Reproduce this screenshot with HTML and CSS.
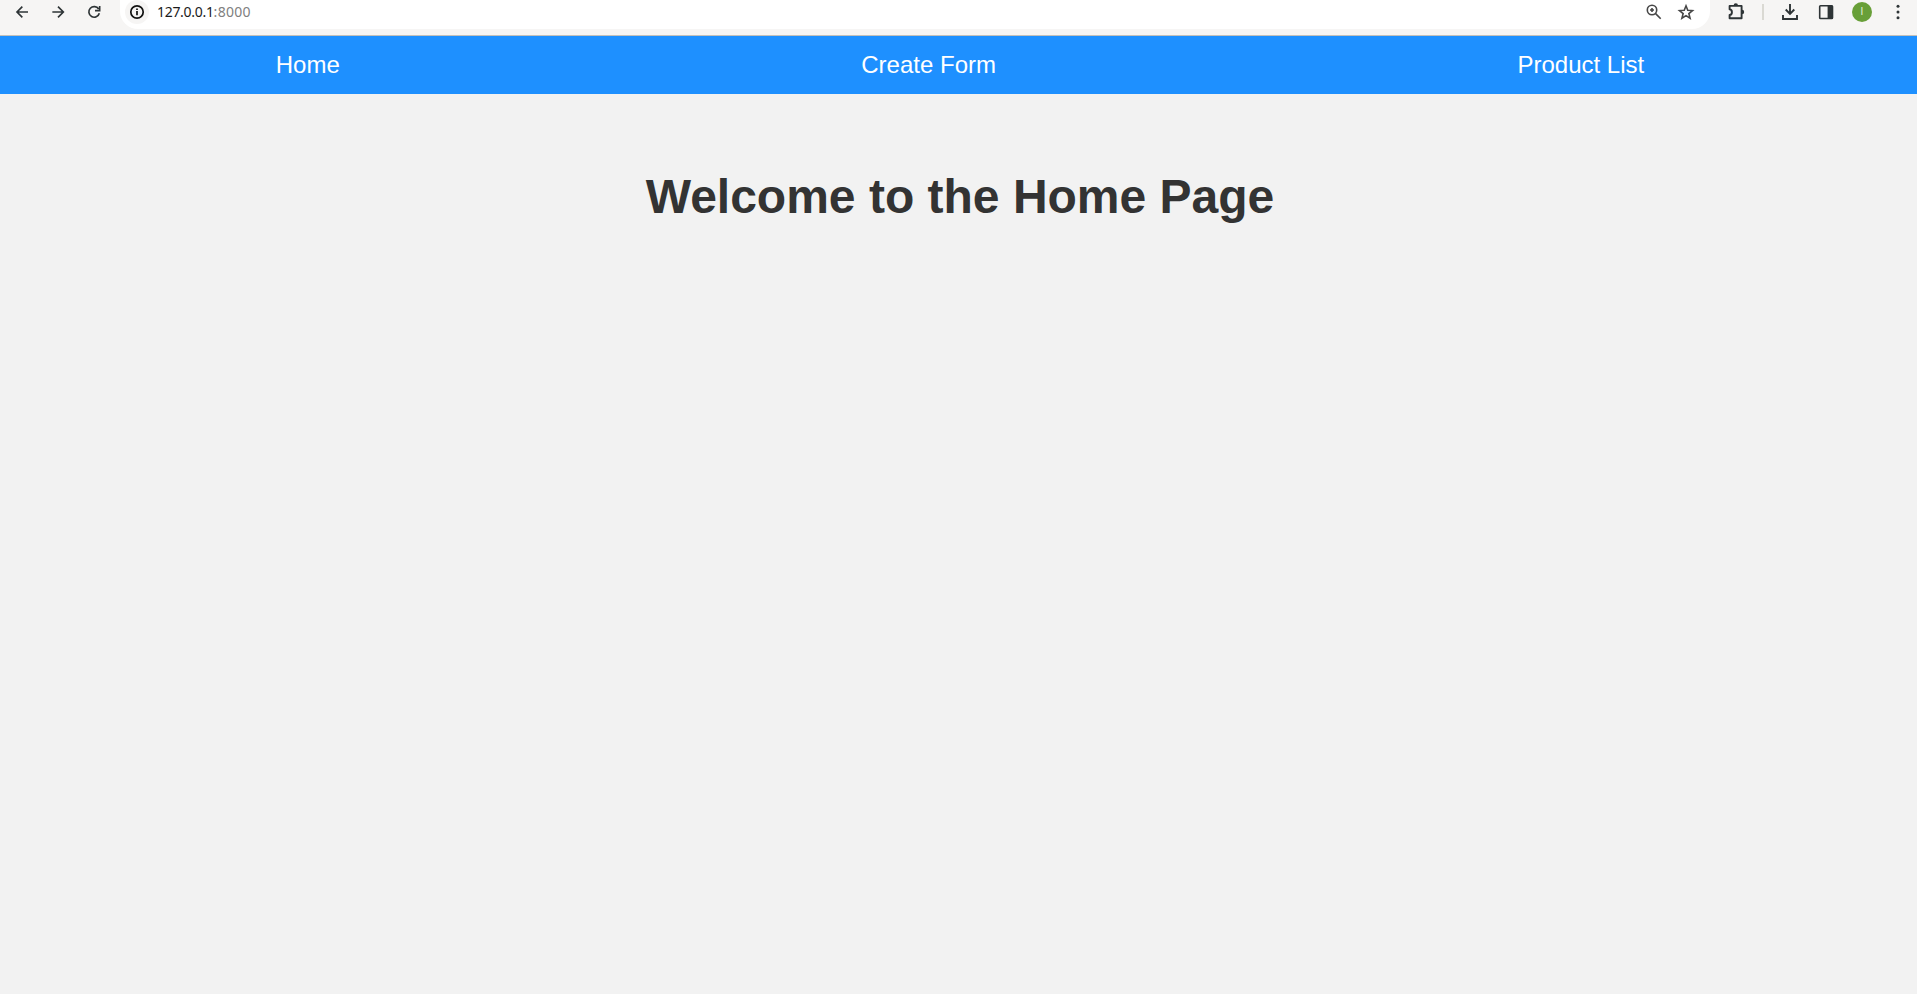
FILE: index.html
```html
<!DOCTYPE html>
<html lang="en">
<head>
<meta charset="utf-8">
<title>Home Page</title>
<link rel="stylesheet" href="styles.css">
</head>
<body>
<header class="toolbar">
  <div class="history">
    <svg class="icon" viewBox="0 0 24 24"><path d="M21 12H5M12.500 4 4.500 12l8 8"/></svg>
    <svg class="icon" viewBox="0 0 24 24"><path d="M3.500 12H19.500M12 4 20 12 12 20"/></svg>
    <svg class="icon" viewBox="0 0 24 24"><path d="M19 7.500A8 8 0 1 0 20 14M20.500 3V10h-7"/></svg>
  </div>
  <div class="address">
    <span class="site-info"><svg class="info-icon" viewBox="0 0 16 16"><circle cx="8" cy="8" r="6.200"/><path d="M8 7v4.300M8 4.500v1.600"/></svg></span>
    <span class="url">127.0.0.1<span class="port">:8000</span></span>
    <svg class="icon soft zoom" viewBox="0 0 18 18"><circle cx="7" cy="7" r="4.700"/><path d="M10.600 10.600 15.700 15.700M7 5v4M5 7h4"/></svg>
    <svg class="icon soft star" viewBox="0 0 18 18"><path d="M9 2.800l1.750 4.400 4.750.35-3.650 3 1.200 4.600L9 12.600l-4.050 2.550 1.200-4.600-3.650-3 4.750-.35z"/></svg>
  </div>
  <div class="actions">
    <svg class="icon dark" viewBox="0 0 18 18"><path stroke-linejoin="round" d="M2.600 2.900H14.600V15.200H2.600V12C5.700 11.700 5.700 6.700 2.600 6.300z"/><path class="solid" d="M6.600 2.500a2.200 2.200 0 0 1 4.400 0zM15 6.800a2.200 2.200 0 0 1 0 4.400z"/></svg>
    <span class="divider"></span>
    <svg class="icon dark" viewBox="0 0 18 18"><path d="M9 1v9.500M4.700 6.500 9 10.800l4.300-4.300M2 12v4h14v-4"/></svg>
    <svg class="icon dark panel" viewBox="0 0 18 18"><rect x="2.700" y="2.700" width="12.800" height="12.800" rx=".8"/><path class="solid" d="M10.600 2.500h5v13h-5z"/></svg>
    <span class="avatar">I</span>
    <svg class="icon dark" viewBox="0 0 18 18"><g class="solid"><circle cx="9" cy="3.300" r="1.500"/><circle cx="9" cy="9" r="1.500"/><circle cx="9" cy="14.700" r="1.500"/></g></svg>
  </div>
</header>
<nav class="navbar">
  <a class="nav-link">Home</a>
  <a class="nav-link">Create Form</a>
  <a class="nav-link">Product List</a>
</nav>
<main class="content">
  <h1 class="title">Welcome to the Home Page</h1>
</main>
</body>
</html>
```
FILE: styles.css
```css
* { box-sizing: border-box; }
html { overflow: hidden; }
body {
  margin: 0;
  width: 1920px;
  height: 994px;
  background: #f2f2f2;
  font-family: "Liberation Sans", Arial, sans-serif;
}
.toolbar {
  display: flex;
  align-items: flex-start;
  height: 36px;
  background: #f6f5f4;
  border-bottom: 1px solid #c3c0bb;
}
.history {
  display: flex;
  gap: 20px;
  width: 120px;
  padding: 4px 0 0 14px;
}
.icon {
  display: block;
  flex: none;
  width: 16px;
  height: 16px;
  fill: none;
  stroke: #2e3436;
  stroke-width: 2.5;
}
.address {
  display: flex;
  align-items: center;
  width: 1590px;
  height: 29px;
  padding: 0 15px 5px 5px;
  background: #fff;
  border-radius: 0 0 18px 18px;
}
.site-info {
  display: grid;
  place-items: center;
  width: 24px;
  height: 24px;
  border-radius: 50%;
  background: #f6f5f4;
}
.info-icon {
  width: 16px;
  height: 16px;
  fill: none;
  stroke: #111;
  stroke-width: 1.7;
}
.url {
  flex: 1;
  padding-left: 8px;
  color: #1b1b1b;
  font: 14px/20px "Noto Sans", sans-serif;
  letter-spacing: -0.3px;
}
.port {
  color: #808080;
  letter-spacing: 0.3px;
}
.icon.soft, .icon.dark {
  width: 18px;
  height: 18px;
  stroke-width: 1.6;
}
.icon.soft { stroke: #474747; }
.star { margin-left: 14px; }
.actions {
  display: flex;
  align-items: center;
  height: 24px;
  padding-left: 17px;
}
.icon.dark { stroke-width: 1.9; }
.icon.panel { stroke-width: 1.6; }
.icon .solid { fill: #2e3436; stroke: none; }
.divider {
  width: 2px;
  height: 16px;
  margin: 0 17px 0 17px;
  background: #dad9d3;
}
.actions .icon + .icon { margin-left: 18px; }
.avatar {
  width: 20px;
  height: 20px;
  margin: 0 17px 0 17px;
  border-radius: 50%;
  background: #689f38;
  color: #e4efdc;
  font: 10px/20px "Liberation Sans", sans-serif;
  text-align: center;
}
.navbar {
  display: flex;
  justify-content: space-around;
  height: 58px;
  padding: 15px;
  background: #1e90ff;
}
.nav-link {
  color: #fff;
  font-size: 24px;
  line-height: 28px;
}
.content {
  padding-top: 75px;
  text-align: center;
}
.title {
  margin: 0;
  color: #333;
  font-size: 48px;
  line-height: 55px;
}
```
